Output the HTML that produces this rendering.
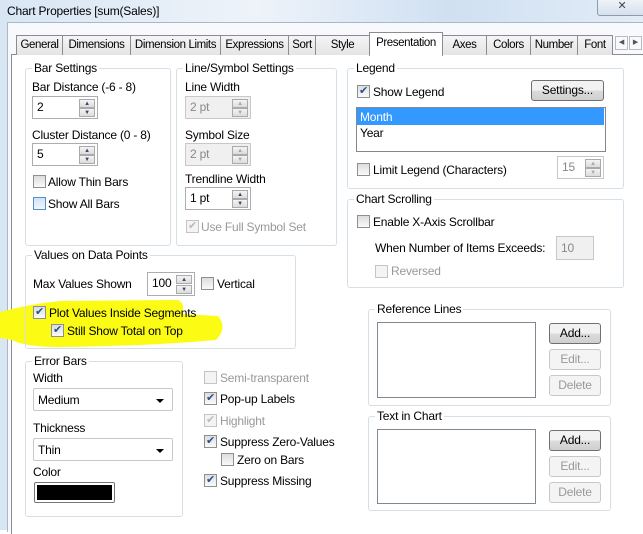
<!DOCTYPE html>
<html><head><style>
*{box-sizing:border-box}
body{margin:0;width:643px;height:530px;overflow:hidden;font-family:"Liberation Sans",sans-serif;font-size:12px;color:#000;background:#fff;position:relative;letter-spacing:-0.2px}
.a{position:absolute}
.t{position:absolute;white-space:nowrap;line-height:14px}
.g{position:absolute;border:1px solid #d5dfe5;border-radius:3px}
.gl{position:absolute;top:-8px;left:6px;background:#fff;padding:0 2px;line-height:14px;white-space:nowrap}
.cb{position:absolute;width:13px;height:13px;border:1px solid #8e8f8f;background:linear-gradient(#ddd,#fafafa)}
.cb.c::after{content:"✔";position:absolute;left:1px;top:-2px;font-size:11px;color:#2a4f8f}
.cb.d{border-color:#c4c4c4;background:#f4f4f4}
.cb.d.c::after{color:#bbb}
.sp{position:absolute;border:1px solid #abadb3;background:#fff}
.sp.d{background:#f0f0f0;color:#888;border-color:#c8c8c8}
.sp span{position:absolute;left:4px;top:3px}
.ar{position:absolute;right:2px;width:16px;border:1px solid #aaa;background:linear-gradient(#f4f4f4,#dcdcdc);height:9px;font-size:6px;text-align:center;line-height:8px;color:#446}
.btn{position:absolute;border:1px solid #707070;border-radius:3px;background:linear-gradient(#f2f2f2 50%,#dcdcdc 50%,#cfcfcf);text-align:center;line-height:18px}
.btn.d{border-color:#c8c8c8;background:#f4f4f4;color:#999}
.sel{position:absolute;border:1px solid #c8c8c8;background:#fff;border-radius:2px}
.sel span{position:absolute;left:4px;top:4px}
.sel i{position:absolute;right:8px;top:10px;border:4px solid transparent;border-top:4px solid #000}
.tab{position:absolute;top:35px;height:20px;border:1px solid #898c95;border-bottom:none;background:linear-gradient(#f5f5f5,#e4e4e4);text-align:center;line-height:18px;white-space:nowrap;overflow:hidden;font-size:11.5px;letter-spacing:-0.4px}
</style></head><body>
<div class="a" style="left:0;top:0;width:643px;height:530px;background:linear-gradient(90deg,#d8e6f4,#eef3fa 40%,#d0e0f2 70%,#e2ecf6)"></div>
<div class="t" style="left:7px;top:4px;font-size:12px">Chart Properties [sum(Sales)]</div>
<div class="a" style="left:597px;top:-2px;width:50px;height:18px;border:1px solid #8a9cb3;border-radius:3px;background:linear-gradient(#f0f4fa,#d6e0ec);text-align:center;font-size:11px;color:#445">✕</div>
<div class="a" style="left:7px;top:22px;width:640px;height:510px;background:#f7f9fc;border-left:1px solid #a8b8c8;border-top:1px solid #a8b8c8"></div>
<div class="a" style="left:11px;top:54px;width:640px;height:480px;background:#fff;border-left:1px solid #898c95;border-top:1px solid #898c95"></div>
<div class="tab" style="left:16px;width:47px">General</div>
<div class="tab" style="left:62px;width:69px">Dimensions</div>
<div class="tab" style="left:130px;width:91px">Dimension Limits</div>
<div class="tab" style="left:220px;width:69px">Expressions</div>
<div class="tab" style="left:288px;width:28px">Sort</div>
<div class="tab" style="left:315px;width:55px">Style</div>
<div class="tab" style="left:369px;top:32px;height:24px;width:74px;background:#fff;line-height:20px">Presentation</div>
<div class="tab" style="left:442px;width:45px">Axes</div>
<div class="tab" style="left:486px;width:45px">Colors</div>
<div class="tab" style="left:530px;width:48px">Number</div>
<div class="tab" style="left:577px;width:36px">Font</div>
<div class="a" style="left:615px;top:36px;width:13px;height:14px;border:1px solid #bbb;font-size:7px;text-align:center;line-height:12px;color:#555">◀</div>
<div class="a" style="left:629px;top:36px;width:13px;height:14px;border:1px solid #bbb;font-size:7px;text-align:center;line-height:12px;color:#555">▶</div>

<svg class="a" style="left:0;top:296px" width="230" height="54"><path d="M0 16 Q30 8 60 5 L178 4 Q186 8 182 18 L218 20 Q228 32 216 44 Q150 50 60 51 Q25 51 12 44 L0 42 Z" fill="#fbfb14"/></svg>

<!-- Bar Settings -->
<div class="g" style="left:25px;top:68px;width:146px;height:178px"><div class="gl">Bar Settings</div></div>
<div class="t" style="left:32px;top:80px">Bar Distance (-6 - 8)</div>
<div class="sp" style="left:32px;top:96px;width:66px;height:23px"><span>2</span><div class="ar" style="top:2px">▲</div><div class="ar" style="top:11px">▼</div></div>
<div class="t" style="left:32px;top:128px">Cluster Distance (0 - 8)</div>
<div class="sp" style="left:32px;top:143px;width:66px;height:23px"><span>5</span><div class="ar" style="top:2px">▲</div><div class="ar" style="top:11px">▼</div></div>
<div class="cb" style="left:33px;top:175px"></div><div class="t" style="left:48px;top:175px">Allow Thin Bars</div>
<div class="cb" style="left:33px;top:197px;border-color:#5b8fc4;background:linear-gradient(#cfe4f7,#eef6fd)"></div><div class="t" style="left:48px;top:197px">Show All Bars</div>

<!-- Line/Symbol -->
<div class="g" style="left:176px;top:68px;width:161px;height:178px"><div class="gl">Line/Symbol Settings</div></div>
<div class="t" style="left:185px;top:80px">Line Width</div>
<div class="sp d" style="left:185px;top:96px;width:66px;height:23px"><span>2 pt</span><div class="ar" style="top:2px;color:#aaa">▲</div><div class="ar" style="top:11px;color:#aaa">▼</div></div>
<div class="t" style="left:185px;top:128px">Symbol Size</div>
<div class="sp d" style="left:185px;top:143px;width:66px;height:23px"><span>2 pt</span><div class="ar" style="top:2px;color:#aaa">▲</div><div class="ar" style="top:11px;color:#aaa">▼</div></div>
<div class="t" style="left:185px;top:172px">Trendline Width</div>
<div class="sp" style="left:185px;top:187px;width:66px;height:23px"><span>1 pt</span><div class="ar" style="top:2px">▲</div><div class="ar" style="top:11px">▼</div></div>
<div class="cb d c" style="left:186px;top:220px"></div><div class="t" style="left:201px;top:220px;color:#999">Use Full Symbol Set</div>

<!-- Values -->
<div class="g" style="left:25px;top:255px;width:271px;height:94px"><div class="gl">Values on Data Points</div></div>
<div class="t" style="left:33px;top:277px">Max Values Shown</div>
<div class="sp" style="left:147px;top:272px;width:48px;height:24px"><span>100</span><div class="ar" style="top:2px">▲</div><div class="ar" style="top:12px">▼</div></div>
<div class="cb" style="left:201px;top:277px"></div><div class="t" style="left:217px;top:277px">Vertical</div>
<div class="cb c" style="left:33px;top:306px"></div><div class="t" style="left:49px;top:306px">Plot Values Inside Segments</div>
<div class="cb c" style="left:51px;top:324px"></div><div class="t" style="left:67px;top:324px">Still Show Total on Top</div>

<!-- Error Bars -->
<div class="g" style="left:25px;top:361px;width:158px;height:156px"><div class="gl">Error Bars</div></div>
<div class="t" style="left:33px;top:371px">Width</div>
<div class="sel" style="left:33px;top:388px;width:140px;height:23px"><span>Medium</span><i></i></div>
<div class="t" style="left:33px;top:421px">Thickness</div>
<div class="sel" style="left:33px;top:438px;width:140px;height:23px"><span>Thin</span><i></i></div>
<div class="t" style="left:33px;top:465px">Color</div>
<div class="a" style="left:34px;top:482px;width:81px;height:21px;border:1px solid #777;border-radius:2px;background:#fff;padding:2px"><div style="width:100%;height:100%;background:#000"></div></div>

<div class="cb d" style="left:204px;top:371px"></div><div class="t" style="left:220px;top:371px;color:#999">Semi-transparent</div>
<div class="cb c" style="left:204px;top:392px"></div><div class="t" style="left:220px;top:392px">Pop-up Labels</div>
<div class="cb d c" style="left:204px;top:414px"></div><div class="t" style="left:220px;top:414px;color:#999">Highlight</div>
<div class="cb c" style="left:204px;top:435px"></div><div class="t" style="left:220px;top:435px">Suppress Zero-Values</div>
<div class="cb" style="left:221px;top:453px"></div><div class="t" style="left:237px;top:453px">Zero on Bars</div>
<div class="cb c" style="left:204px;top:474px"></div><div class="t" style="left:220px;top:474px">Suppress Missing</div>

<!-- Legend -->
<div class="g" style="left:347px;top:68px;width:277px;height:121px"><div class="gl">Legend</div></div>
<div class="cb c" style="left:357px;top:85px"></div><div class="t" style="left:373px;top:85px">Show Legend</div>
<div class="btn" style="left:531px;top:80px;width:73px;height:21px">Settings...</div>
<div class="a" style="left:356px;top:107px;width:250px;height:45px;border:1px solid #828790;background:#fff"></div>
<div class="a" style="left:357px;top:108px;width:247px;height:17px;background:#3399ff"></div>
<div class="t" style="left:360px;top:110px;color:#fff">Month</div>
<div class="t" style="left:360px;top:126px">Year</div>
<div class="cb" style="left:357px;top:163px"></div><div class="t" style="left:373px;top:163px">Limit Legend (Characters)</div>
<div class="sp d" style="left:557px;top:156px;width:47px;height:23px;background:#fff"><span>15</span><div class="ar" style="top:2px;color:#aaa">▲</div><div class="ar" style="top:11px;color:#aaa">▼</div></div>

<!-- Chart Scrolling -->
<div class="g" style="left:347px;top:199px;width:277px;height:89px"><div class="gl">Chart Scrolling</div></div>
<div class="cb" style="left:357px;top:215px"></div><div class="t" style="left:373px;top:215px">Enable X-Axis Scrollbar</div>
<div class="t" style="left:375px;top:241px">When Number of Items Exceeds:</div>
<div class="sp d" style="left:556px;top:236px;width:38px;height:24px"><span style="top:4px">10</span></div>
<div class="cb d" style="left:375px;top:265px"></div><div class="t" style="left:391px;top:264px;color:#999">Reversed</div>

<!-- Reference Lines -->
<div class="g" style="left:368px;top:309px;width:243px;height:97px"><div class="gl">Reference Lines</div></div>
<div class="a" style="left:377px;top:322px;width:159px;height:76px;border:1px solid #828790;background:#fff"></div>
<div class="btn" style="left:549px;top:323px;width:52px;height:21px">Add...</div>
<div class="btn d" style="left:549px;top:349px;width:52px;height:21px">Edit...</div>
<div class="btn d" style="left:549px;top:375px;width:52px;height:21px">Delete</div>

<!-- Text in Chart -->
<div class="g" style="left:368px;top:416px;width:243px;height:95px"><div class="gl">Text in Chart</div></div>
<div class="a" style="left:377px;top:429px;width:159px;height:75px;border:1px solid #828790;background:#fff"></div>
<div class="btn" style="left:549px;top:430px;width:52px;height:21px">Add...</div>
<div class="btn d" style="left:549px;top:456px;width:52px;height:21px">Edit...</div>
<div class="btn d" style="left:549px;top:482px;width:52px;height:21px">Delete</div>
</body></html>
